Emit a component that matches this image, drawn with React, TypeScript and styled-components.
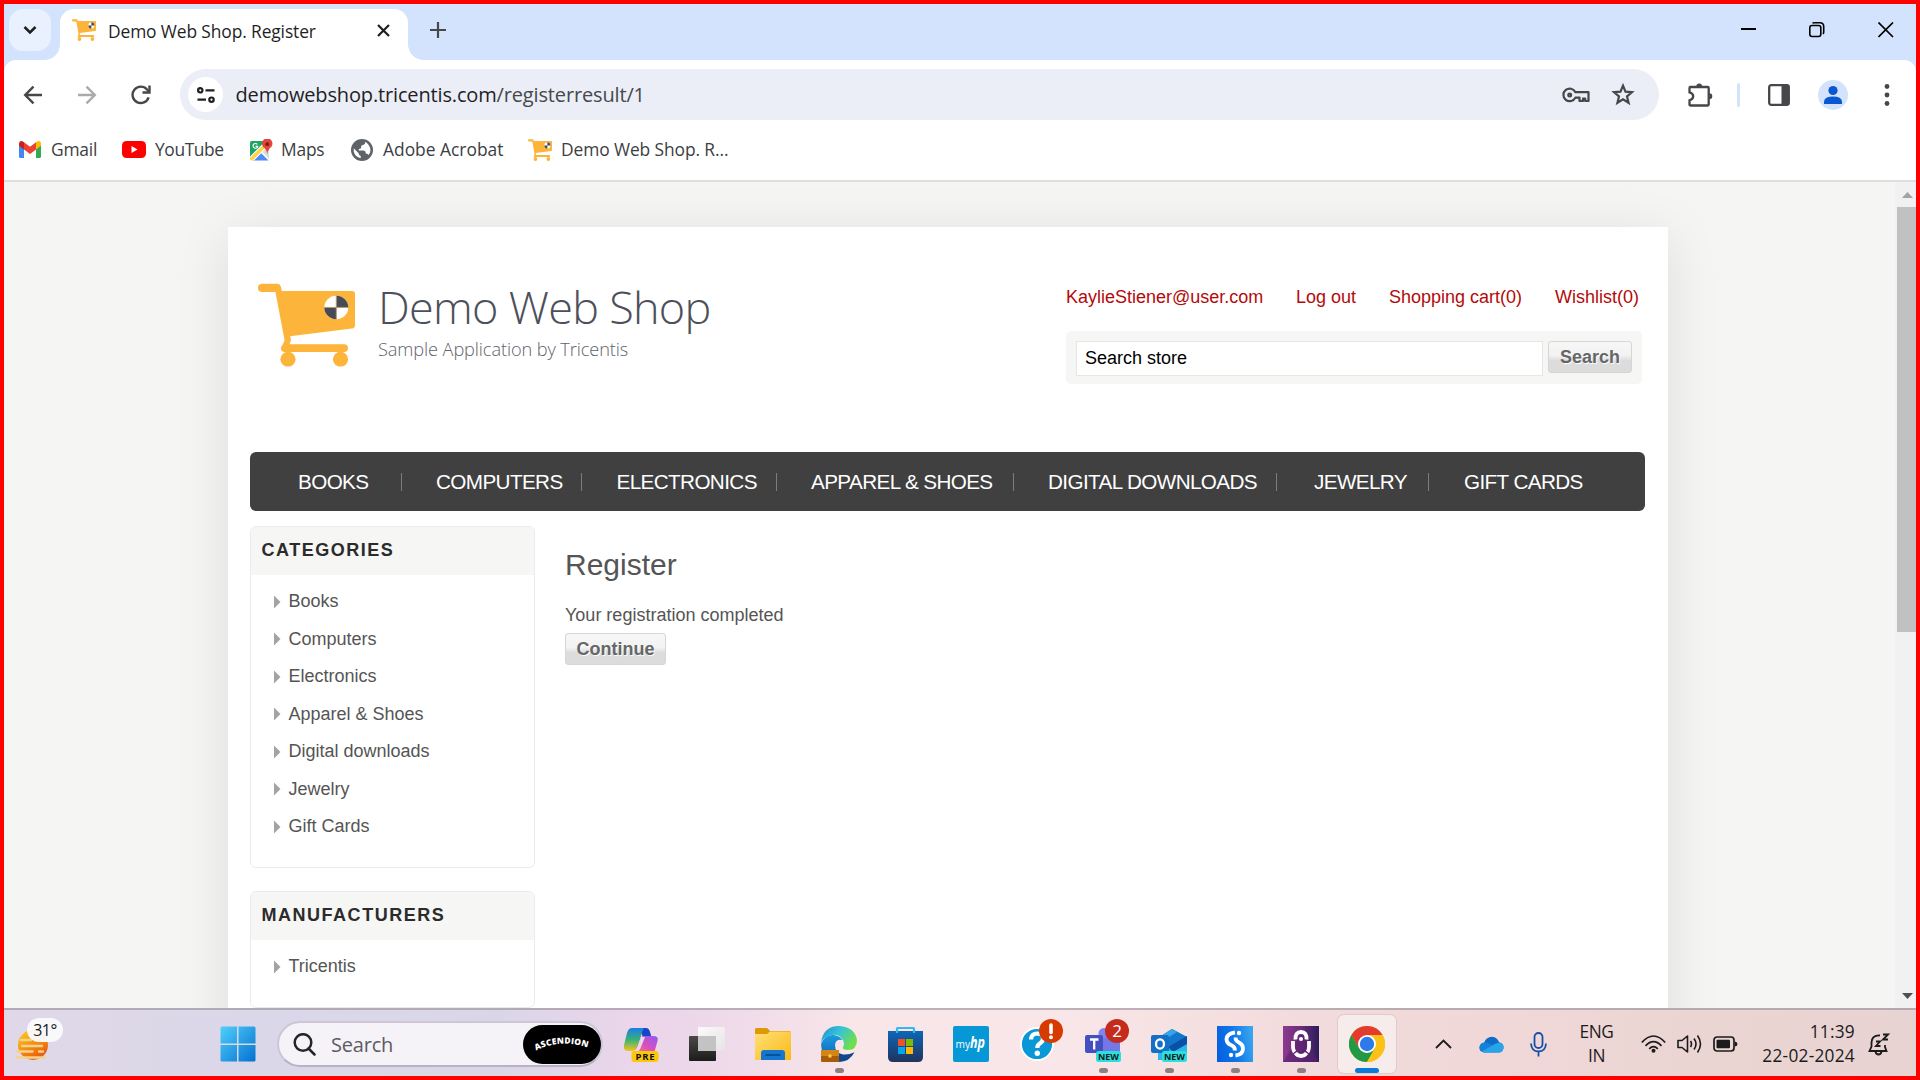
import React from "react";
import styled, { createGlobalStyle } from "styled-components";

const Global = createGlobalStyle`
  * { box-sizing: border-box; }
  html, body { margin: 0; padding: 0; overflow: hidden; }
  body { width: 1920px; height: 1080px; background: #fff; }
  ul, h1, h2, p { margin: 0; padding: 0; list-style: none; font-weight: inherit; }
  svg { display: block; flex: none; }
`;

const ui = `"Segoe UI", "Open Sans", "Noto Sans", sans-serif`;
const arial = `Arial, "Liberation Sans", sans-serif`;

/* ---------- window ---------- */

const Screen = styled.div`
  width: 1920px;
  height: 1080px;
  border: 4px solid #ff0000;
  display: flex;
  flex-direction: column;
  overflow: hidden;
  background: #d3e3fd;
  font-family: ${ui};
`;

const Label = styled.span<{ $w: number; $size: number; $ls?: number }>`
  display: block;
  flex: none;
  width: ${(p) => p.$w}px;
  font-size: ${(p) => p.$size}px;
  letter-spacing: ${(p) => p.$ls ?? 0}px;
  line-height: 1.3;
  white-space: nowrap;
`;

const TabStrip = styled.div`
  height: 56px;
  flex: none;
  display: flex;
  padding-left: 5px;
`;

const TabSearch = styled.div`
  width: 42px;
  height: 42px;
  margin: 5px 9px 0 0;
  border-radius: 14px;
  background: #e9f0fe;
  display: flex;
  align-items: center;
  justify-content: center;
`;

const Tab = styled.div`
  position: relative;
  width: 348px;
  height: 51px;
  margin-top: 5px;
  padding: 0 18px 9px 12px;
  border-radius: 14px 14px 0 0;
  background: #fff;
  display: flex;
  align-items: center;
  &::before,
  &::after {
    content: "";
    position: absolute;
    bottom: 0;
    width: 15px;
    height: 15px;
  }
  &::before {
    left: -15px;
    background: radial-gradient(circle at 0 0, transparent 14.5px, #fff 15px);
  }
  &::after {
    right: -15px;
    background: radial-gradient(circle at 100% 0, transparent 14.5px, #fff 15px);
  }
`;

const TabTitle = styled.div`
  margin-left: 12px;
  padding-top: 3px;
  flex: 1;
  color: #1f1f1f;
`;

const NewTab = styled.div`
  margin: 18px 0 0 22px;
`;

const WindowButtons = styled.div`
  margin-left: auto;
  padding: 18px 22px 0 0;
  display: flex;
  gap: 53px;
`;

const Toolbar = styled.div`
  height: 120px;
  flex: none;
  background: #fff;
  border-radius: 12px 12px 0 0;
`;

const AddressRow = styled.div`
  height: 69px;
  display: flex;
  align-items: center;
`;

const NavButtons = styled.div`
  width: 176px;
  padding-left: 19px;
  display: flex;
  gap: 34px;
`;

const Omnibox = styled.div`
  width: 1479px;
  height: 51px;
  border-radius: 26px;
  background: #ebeef7;
  display: flex;
  align-items: center;
  padding: 0 24px 0 8px;
`;

const SiteInfo = styled.div`
  width: 35px;
  height: 35px;
  border-radius: 50%;
  background: #fff;
  display: flex;
  align-items: center;
  justify-content: center;
`;

const Url = styled.div`
  flex: 1;
  display: flex;
  margin-left: 12.5px;
  color: #46484c;
  b { font-weight: 400; color: #1f1f1f; }
`;

const OmniIcons = styled.div`
  display: flex;
  align-items: center;
  gap: 21px;
`;

const ToolbarIcons = styled.div`
  margin-left: 28px;
  display: flex;
  align-items: center;
`;

const ToolbarDivider = styled.div`
  width: 3px;
  height: 24px;
  margin: 0 28px 0 24px;
  border-radius: 2px;
  background: #d3e3fd;
`;

const Avatar = styled.div`
  width: 30px;
  height: 30px;
  margin: 0 36px 0 28px;
  border-radius: 50%;
  background: #d3e3fd;
`;

const Bookmarks = styled.div`
  display: flex;
  align-items: center;
  height: 41px;
  padding-left: 15px;
  color: #3c3e42;
`;

const Bookmark = styled.div<{ $gap: number; $after: number }>`
  display: flex;
  align-items: center;
  gap: ${(p) => p.$gap}px;
  margin-right: ${(p) => p.$after}px;
`;

/* ---------- page ---------- */

const Viewport = styled.div`
  height: 828px;
  flex: none;
  border-top: 2px solid #dedfdf;
  background: #f5f5f3;
  display: flex;
  overflow: hidden;
`;

const PageArea = styled.div`
  width: 1891px;
  padding: 45px 0 0 224px;
`;

const Sheet = styled.div`
  width: 1440px;
  height: 900px;
  padding: 0 23px 0 22px;
  background: #fff;
  box-shadow: 0 9px 50px rgba(0, 0, 0, 0.1);
  font-family: ${arial};
`;

const ScrollTrack = styled.div`
  width: 21px;
  background: #f1f1f1;
  display: flex;
  flex-direction: column;
  padding: 10px 0 9px 2px;
`;

const Thumb = styled.div`
  width: 19px;
  height: 425px;
  margin: 9px 0 auto;
  background: #c1c1c1;
`;

const Header = styled.div`
  height: 225px;
  display: flex;
  justify-content: space-between;
`;

const Logo = styled.div`
  display: flex;
  padding: 56px 0 0 8px;
`;

const LogoText = styled.div`
  margin: -2px 0 0 23px;
  font-family: "Open Sans", sans-serif;
  font-weight: 300;
`;

const LogoName = styled.div`
  font-size: 45px;
  line-height: 52px;
  letter-spacing: -0.72px;
  color: #4d505a;
  white-space: nowrap;
`;

const LogoSub = styled.div`
  font-size: 18.2px;
  line-height: 24px;
  margin-top: 4px;
  letter-spacing: -0.1px;
  color: #5f626b;
  white-space: nowrap;
`;

const HeaderSide = styled.div`
  width: 579px;
  padding-top: 59px;
`;

const HeaderLinks = styled.div`
  height: 23px;
  display: flex;
  color: #b30a0a;
  line-height: 23px;
`;

const HeaderLink = styled.span<{ $w: number }>`
  width: ${(p) => p.$w}px;
  font-size: 18px;
  white-space: nowrap;
`;

const SearchBox = styled.div`
  width: 576px;
  height: 53px;
  margin-top: 22px;
  padding: 10px;
  border-radius: 5px;
  background: #f6f6f5;
  display: flex;
  align-items: flex-start;
  gap: 5px;
`;

const SearchInput = styled.div`
  width: 467px;
  height: 35px;
  padding-left: 8px;
  border: 1px solid #e6e6e6;
  background: #fff;
  color: #000;
  font-size: 18px;
  line-height: 33px;
`;

const Button = styled.div<{ $w: number }>`
  width: ${(p) => p.$w}px;
  height: 32px;
  border: 1px solid #d6d6d6;
  border-radius: 3px;
  background: linear-gradient(#f7f7f7 0, #f2f2f2 45%, #dcdcdc 62%, #dcdcdc 100%);
  color: #666;
  font: bold 18px/30px ${arial};
  text-align: center;
  text-shadow: 1px 1px 1px #fff;
`;

const Menu = styled.ul`
  height: 59px;
  border-radius: 6px;
  background: #404040;
  display: flex;
  align-items: center;
  padding-left: 48px;
  color: #fff;
  font-size: 20.7px;
`;

const MenuItem = styled.li<{ $w: number; $after: number; $last?: boolean }>`
  width: ${(p) => p.$w}px;
  margin-right: ${(p) => p.$after}px;
  height: 18px;
  line-height: 18px;
  border-right: ${(p) => (p.$last ? "0" : "1px solid #7d7d7d")};
  white-space: nowrap;
  letter-spacing: -0.62px;
`;

const Columns = styled.div`
  display: flex;
  padding-top: 15px;
`;

const Side = styled.div`
  width: 285px;
  display: flex;
  flex-direction: column;
  gap: 23px;
`;

const Block = styled.div`
  border: 1px solid #ebebea;
  border-radius: 6px;
  overflow: hidden;
  padding-bottom: 13.5px;
`;

const BlockTitle = styled.h2`
  height: 48px;
  padding-left: 10.5px;
  background: #f6f6f5;
  color: #2b2b2b;
  font: bold 18px/46px ${arial};
  letter-spacing: 1.52px;
`;

const BlockList = styled.ul`
  padding: 8px 0 8px 23px;
`;

const BlockItem = styled.li`
  height: 37.5px;
  display: flex;
  align-items: center;
  gap: 7.5px;
  color: #555;
  font-size: 18px;
`;

const Main = styled.div`
  padding: 19px 0 0 30px;
  color: #555;
`;

const Title = styled.h1`
  font-size: 30px;
  line-height: 40px;
`;

const Result = styled.p`
  margin: 17px 0 5px;
  font-size: 18px;
  line-height: 26px;
`;

/* ---------- taskbar ---------- */

const Taskbar = styled.div`
  height: 68px;
  flex: none;
  display: flex;
  align-items: center;
  padding-top: 2px;
  border-top: 2px solid rgba(150, 140, 150, 0.6);
  background: linear-gradient(90deg, #e0d8e8 0, #d9d7e8 300px, #dad6e8 500px, #ead5ea 620px, #edd8ea 700px, #f8e6e8 850px, #f9e6e8 1060px, #f2dbdc 1300px, #f0d8d8 1500px, #ead5d2 1700px, #e8d3d3 1912px);
`;

const Weather = styled.div`
  position: relative;
  width: 216px;
  padding-left: 11px;
`;

const Temp = styled.div`
  position: absolute;
  left: 23px;
  top: -7px;
  width: 36px;
  height: 24px;
  border-radius: 12px;
  background: rgba(250, 249, 252, 0.96);
  color: #1b1b1b;
  font-size: 16px;
  line-height: 24px;
  text-align: center;
  letter-spacing: -0.5px;
`;

const SearchPill = styled.div`
  width: 326px;
  height: 46px;
  margin-left: 21px;
  border: 2px solid #cdc6d8;
  border-bottom-color: #b9b2c4;
  border-radius: 23px;
  background: #f5f2f8;
  display: flex;
  align-items: center;
  padding-left: 14px;
`;

const SearchHint = styled.span`
  flex: 1;
  margin-left: 15px;
  color: #5d5a62;
  font-size: 20px;
  letter-spacing: -0.2px;
`;

const Apps = styled.div`
  display: flex;
  margin-left: 9px;
`;

const TaskButton = styled.div<{ $active?: boolean }>`
  position: relative;
  width: 58px;
  height: 58px;
  margin-right: 8px;
  border-radius: 6px;
  background: ${(p) => (p.$active ? "#f7ecec" : "transparent")};
  box-shadow: ${(p) => (p.$active ? "0 0 0 1px rgba(120,90,90,.12)" : "none")};
  display: flex;
  align-items: center;
  justify-content: center;
`;

const Running = styled.i<{ $active?: boolean }>`
  position: absolute;
  bottom: 0;
  width: ${(p) => (p.$active ? 24 : 9)}px;
  height: 5px;
  border-radius: 3px;
  background: ${(p) => (p.$active ? "#0a7bd6" : "#8d8082")};
`;

const Tray = styled.div`
  display: flex;
  align-items: center;
  margin-left: auto;
  color: #1b1b1b;
`;

const TrayText = styled.div<{ $align: string; $ls: number; $w: number }>`
  width: ${(p) => p.$w}px;
  font-size: 17.3px;
  line-height: 24px;
  letter-spacing: ${(p) => p.$ls}px;
  text-align: ${(p) => p.$align};
  white-space: nowrap;
`;

const TraySpace = styled.div<{ $l: number }>`
  margin-left: ${(p) => p.$l}px;
`;

const FreeSvg = styled.svg`
  overflow: visible;
`;

/* ---------- drawings ---------- */

const Cart = ({ w, h }: { w: number; h: number }) => (
  <svg width={w} height={h} viewBox="0 0 97 86" preserveAspectRatio="none">
    <path d="M4 .8h15.500q3.500 0 4.300 7.400h70.200q3 0 3 3v32q0 3-3 3.400L32 54.400q2 4-.6 8.200h54.600a4 4 0 0 1 0 8H26q-4-1-2.800-5 2-3 3.400-7L17.400 9.300H4A4.200 4.200 0 0 1 4 .8z" fill="#fdb43b" />
    <circle cx="30" cy="78" r="7.600" fill="#fdb43b" />
    <circle cx="82.500" cy="78" r="7.600" fill="#fdb43b" />
    <circle cx="78.300" cy="25" r="12" fill="#fff" />
    <path d="M78.300 25V13a12 12 0 0 1 12 12zM78.300 25v12a12 12 0 0 1-12-12z" fill="#474b56" />
    <path d="M78.300 13v24M66.300 25h24" stroke="#b39a72" strokeWidth="1" />
  </svg>
);

const Arrow = ({ flip, color }: { flip?: boolean; color: string }) => (
  <svg width="20" height="20" viewBox="0 0 20 20" fill="none" stroke={color} strokeWidth="2.400" transform={flip ? "rotate(180)" : undefined}>
    <path d="M19 10H2.500M10.500 1.700L2.200 10l8.300 8.300" />
  </svg>
);

const Gmail = () => (
  <svg width="22" height="17" viewBox="0 0 22 17">
    <path d="M0 2.500V15.500Q0 17 1.500 17H5V7z" fill="#4285f4" />
    <path d="M22 2.500V15.500Q22 17 20.500 17H17V7z" fill="#34a853" />
    <path d="M17 1.300V8.500L22 4.800V2.500Q21.500-.8 18.200.4z" fill="#fbbc04" />
    <path d="M0 2.500V4.800L5 8.500V1.300L3.800.4Q.5-.8 0 2.500z" fill="#c5221f" />
    <path d="M5 1.300L11 5.800 17 1.300V8.500L11 13 5 8.500z" fill="#ea4335" />
  </svg>
);

const YouTube = () => (
  <svg width="24" height="17" viewBox="0 0 24 17">
    <rect width="24" height="17" rx="4.500" fill="#ff0000" />
    <path d="M9.500 5v7l6-3.500z" fill="#fff" />
  </svg>
);

const Maps = () => (
  <svg width="23" height="22" viewBox="0 0 23 22">
    <path d="M1.500 2H13l3 4L1 20Q0 19.500 0 18V3.500Q0 2 1.500 2z" fill="#1fa463" />
    <path d="M11 11.500L19 20V6l-3-1z" fill="#dadcde" />
    <path d="M2.500 21.500L10.500 13.500l8 8z" fill="#4c8bf5" />
    <path d="M0 17.500L13 4.500l4 4L4 21.500H1.500Q0 21.500 0 20z" fill="#fff" />
    <path d="M0 19L13.500 5.500l2.500 2.500L2.500 21.500Q0 21.500 0 20z" fill="#ffd24a" />
    <path d="M7.300 5.300a2.400 2.400 0 1 0 .5 2.100H5.600" fill="none" stroke="#fff" strokeWidth="1.100" />
    <path d="M17.200 15q-.4-3.500-2.600-6a5.200 5.200 0 1 1 5.300 0Q17.700 11.500 17.200 15z" fill="#e2453a" />
    <circle cx="17.300" cy="5.200" r="1.900" fill="#7d1c16" />
  </svg>
);

const Globe = () => (
  <svg width="22" height="22" viewBox="0 0 22 22">
    <circle cx="11" cy="11" r="11" fill="#5f6368" />
    <path d="M14 2.800q.5 2.600-2 3.200-2.300.2-1.800 2.500-.4 1.500-2.400 1.500v1.500h5q2.300.5 2 3 2.200.2 3 1.500 2-2.600 1.600-6Q18.300 5 14 2.800zM2.700 9.200Q1.800 17 9.700 19.200V17q-2-.4-2-2.700z" fill="#fff" />
  </svg>
);

const Key = () => (
  <svg width="28" height="16" viewBox="0 0 28 16" fill="none" stroke="#46474a" strokeWidth="2.200">
    <path d="M13.400 5.200A6.300 6.300 0 1 0 13.400 10.600H17.500V14H21V11.500h2.200V14H26.500V5.200z" strokeLinejoin="round" />
    <circle cx="7.700" cy="7.900" r="1.400" />
  </svg>
);

const Star = () => (
  <svg width="24" height="23" viewBox="0 0 24 23" fill="none" stroke="#46474a" strokeWidth="2.200">
    <path d="M12 2.700l2.500 6 6.500.5-5 4.300 1.600 6.300L12 16.400l-5.600 3.400L8 13.500 3 9.200l6.500-.5z" />
  </svg>
);

const Puzzle = () => (
  <svg width="26" height="26" viewBox="0 0 26 26">
    <path d="M3.500 5h17.200q1 0 1 1v16.500q0 1-1 1H3.500q-1 0-1-1v-4.200q3.700-1 3.700-4t-3.700-4V6q0-1 1-1z" fill="none" stroke="#46474a" strokeWidth="2.300" />
    <path d="M9.300 4.500a2.900 2.900 0 0 1 5.800 0zM22.300 11.300a3 3 0 0 1 0 6z" fill="#46474a" />
  </svg>
);

const Bullet = () => (
  <svg width="7" height="14" viewBox="0 0 7 14"><path d="M0 .5L6.500 7 0 13.500z" fill="#a3a3a3" /></svg>
);

const Copilot = () => (
  <svg width="36" height="36" viewBox="0 0 36 36">
    <defs>
      <linearGradient id="cp1" x1="0" y1="0" x2="0" y2="1"><stop offset="0" stopColor="#1f7be8" /><stop offset=".5" stopColor="#35b27a" /><stop offset="1" stopColor="#f2c51a" /></linearGradient>
      <linearGradient id="cp2" x1="1" y1="0" x2="0" y2="1"><stop offset="0" stopColor="#8f5af0" /><stop offset=".5" stopColor="#d84fc0" /><stop offset="1" stopColor="#ff8a5c" /></linearGradient>
    </defs>
    <path d="M16 2h7q3 0 4 4l1.500 5H20z" fill="#1546c8" />
    <path d="M9 2h12q-2 3-3 8l-3 11q-1 4-5 4H5q-5 0-4-6L4 7Q5.500 2 9 2z" fill="url(#cp1)" />
    <path d="M21 10h9q6 0 4.500 5l-2.500 9q-1 3-4 3H8q3-.5 5-5l4-6q0-6 4-6z" fill="url(#cp2)" />
    <path d="M18 11h4q-2 5-4 10-1.500 4.500-4.500 4.500H9q4-1 5.500-5z" fill="#eed6ee" />
    <rect x="8.500" y="25" width="27" height="11" rx="3" fill="#fcc60a" />
    <text x="22" y="33.800" textAnchor="middle" fontFamily="Open Sans" fontWeight="700" fontSize="9.500" textLength="19" fill="#111">PRE</text>
  </svg>
);

const TaskView = () => (
  <svg width="36" height="36" viewBox="0 0 36 36">
    <defs>
      <linearGradient id="tv" x1="0" y1="0" x2="0" y2="1"><stop offset="0" stopColor="#4a4a48" /><stop offset="1" stopColor="#1c1c1c" /></linearGradient>
      <linearGradient id="tv2" x1="0" y1="0" x2="1" y2="1"><stop offset="0" stopColor="#fbfbfb" /><stop offset="1" stopColor="#e6e3e4" /></linearGradient>
    </defs>
    <rect x="0" y="10" width="27" height="25" rx="1" fill="url(#tv)" />
    <rect x="9" y="1" width="27" height="24" rx="1" fill="url(#tv2)" />
    <path d="M9 10h18v15H10q-1 0-1-1z" fill="#c3c3c3" />
  </svg>
);

const Folder = () => (
  <svg width="36" height="36" viewBox="0 0 36 36">
    <defs>
      <linearGradient id="fo" x1="0" y1="0" x2="1" y2="1"><stop offset="0" stopColor="#ffe07a" /><stop offset="1" stopColor="#fbb914" /></linearGradient>
    </defs>
    <path d="M0 3.500Q0 2 1.500 2H11q1.500 0 2.500 1.200L15 5h19.500Q36 5 36 6.500V12H0z" fill="#dd9a06" />
    <path d="M0 8h12l3-2.500h19.500Q36 5.500 36 7V34H0z" fill="url(#fo)" />
    <path d="M6 34v-7q0-3 3-3h18q3 0 3 3v7z" fill="#1576d0" />
    <path d="M10.500 29h15" stroke="#0a4c94" strokeWidth="1.800" />
  </svg>
);

const Edge = () => (
  <svg width="36" height="36" viewBox="0 0 36 36">
    <defs>
      <linearGradient id="ed1" x1="0" y1="0" x2="1" y2=".5"><stop offset="0" stopColor="#1c8fd2" /><stop offset=".5" stopColor="#36c3d6" /><stop offset="1" stopColor="#6fe04c" /></linearGradient>
      <linearGradient id="ed2" x1="0" y1="0" x2="0" y2="1"><stop offset="0" stopColor="#1b9de0" /><stop offset="1" stopColor="#0d5bb0" /></linearGradient>
    </defs>
    <path d="M14 19q-.5 8 8 9.500 6 .5 11.500-2.200-5 9.700-15.500 9.700-7-7-4-17z" fill="#10468c" />
    <path d="M0 18Q4 8 13 9q6 1 8.500 5-7-1-7.500 5-.5 8 6 17h-4Q1 35 0 18z" fill="url(#ed2)" />
    <path d="M0 17Q2 0 18 0q16 1 18 14 0 10-9 10-6 0-5-3 2-3 0-7-4-6-11-5Q3 10 0 17z" fill="url(#ed1)" />
    <rect y="24" width="18" height="12" rx="1" fill="#a85c0a" />
    <path d="M0 25q0-1 1-1h16q1 0 1 1v5H0z" fill="#d58416" />
    <rect x="7.500" y="28.500" width="3" height="3" fill="#ffd54a" />
  </svg>
);

const Store = () => (
  <svg width="35" height="36" viewBox="0 0 35 36">
    <defs>
      <linearGradient id="st" x1="0" y1="0" x2="0" y2="1"><stop offset="0" stopColor="#0d66ba" /><stop offset="1" stopColor="#20345c" /></linearGradient>
    </defs>
    <path d="M0 5h35v26q0 5-5 5H5q-5 0-5-5z" fill="url(#st)" />
    <path d="M9 7V2.500Q9 2 9.500 2h16q.5 0 .5.5V7" fill="none" stroke="#35b7f2" strokeWidth="2.200" />
    <path d="M10 13h7v7h-7z" fill="#f25022" /><path d="M18 13h7v7h-7z" fill="#7fba00" />
    <path d="M10 21h7v7h-7z" fill="#00a4ef" /><path d="M18 21h7v7h-7z" fill="#ffb900" />
  </svg>
);

const MyHp = () => (
  <svg width="36" height="36" viewBox="0 0 36 36">
    <rect width="36" height="36" rx="2" fill="#0698d6" />
    <text x="2.500" y="21.500" fontFamily="Open Sans" fontSize="11" textLength="14.500" lengthAdjust="spacingAndGlyphs" fill="#fff">my</text>
    <text x="17" y="22" fontFamily="Open Sans" fontStyle="italic" fontWeight="700" fontSize="15.500" textLength="15" lengthAdjust="spacingAndGlyphs" fill="#fff">hp</text>
  </svg>
);

const Help = () => (
  <FreeSvg width="36" height="36" viewBox="-1 8 36 36">
    <circle cx="17" cy="26" r="16" fill="#0a97d7" stroke="#fff" strokeWidth="1.800" />
    <path d="M11 21.500q.3-6 6.300-6 5.700.3 5.700 5 0 3-3.200 5-2.500 1.500-2.500 4.500" fill="none" stroke="#fff" strokeWidth="4.200" />
    <circle cx="17.300" cy="35.300" r="2.700" fill="#fff" />
    <circle cx="31" cy="13" r="12" fill="#d83b01" />
    <path d="M31 7v7.500" stroke="#fff" strokeWidth="3.600" strokeLinecap="round" />
    <circle cx="31" cy="19.300" r="2" fill="#fff" />
  </FreeSvg>
);

const NewTag = ({ x, y }: { x: number; y: number }) => (
  <g>
    <rect x={x} y={y} width="25" height="11" rx="2.500" fill="#2be0dc" />
    <text x={x + 12.5} y={y + 8.8} textAnchor="middle" fontFamily="Open Sans" fontWeight="700" fontSize="9" textLength="21" lengthAdjust="spacingAndGlyphs" fill="#10201f">NEW</text>
  </g>
);

const Teams = () => (
  <FreeSvg width="36" height="36" viewBox="0 7 36 36">
    <circle cx="19" cy="14.500" r="5.500" fill="#7f85f0" />
    <path d="M14 19h21v13q0 6-8 6H14z" fill="#7478e6" />
    <rect x="0" y="16" width="18" height="18" rx="2" fill="#4450c0" />
    <path d="M5 20.500h8.500M9.200 20.500V30.500" stroke="#fff" strokeWidth="2.300" fill="none" />
    <NewTag x={11} y={32} />
    <circle cx="32" cy="12" r="12" fill="#c42b1c" />
    <text x="32" y="18" textAnchor="middle" fontFamily="Open Sans" fontSize="17" fill="#fff">2</text>
  </FreeSvg>
);

const Outlook = () => (
  <svg width="36" height="36" viewBox="0 0 36 36">
    <path d="M7 12L21 3l15 8v18q0 5-5 5H7z" fill="#2fb4ee" />
    <path d="M7 12L21 3l15 8-16 9H7z" fill="#1277cc" />
    <path d="M17 21L36 10v8L22 26z" fill="#0b4fa8" />
    <path d="M7 12L21 3l5 3-14 9z" fill="#38a4e8" />
    <rect x="0" y="9" width="18" height="18" rx="2" fill="#1470c4" />
    <ellipse cx="9" cy="18" rx="4" ry="4.700" fill="none" stroke="#fff" strokeWidth="2.300" />
    <NewTag x={11} y={25} />
  </svg>
);

const BlueS = () => (
  <svg width="36" height="36" viewBox="0 0 36 36">
    <defs><linearGradient id="bs" x1="0" y1=".6" x2="1" y2=".4"><stop offset="0" stopColor="#0560e0" /><stop offset=".5" stopColor="#0f78ea" /><stop offset="1" stopColor="#3aa4ee" /></linearGradient></defs>
    <rect width="36" height="36" fill="url(#bs)" />
    <path d="M18 6.500q-8 1-8.500 6.500.3 4.500 4.500 6 4 1.500 4 5.500M18.500 29.500q7.500-1 7.500-7 0-4-4-6-3.500-1.500-3.500-5" fill="none" stroke="#fff" strokeWidth="3.800" />
    <circle cx="22" cy="7" r="2.200" fill="#fff" /><circle cx="14" cy="29" r="2.200" fill="#fff" />
  </svg>
);

const PurpleU = () => (
  <svg width="36" height="36" viewBox="0 0 36 36">
    <defs><linearGradient id="pu" x1="0" y1="0" x2="1" y2="0"><stop offset="0" stopColor="#8e3a8e" /><stop offset=".5" stopColor="#6a2d78" /><stop offset="1" stopColor="#2e1b5a" /></linearGradient></defs>
    <rect width="36" height="36" fill="url(#pu)" />
    <path d="M0 36L18 8l18 28z" fill="#5a2170" opacity=".6" />
    <path d="M12.500 13.500Q12 6 18 6t5.500 7.500M10 15v6q0 3 1.500 5M26 15v6q0 3-1.500 5M12.500 27q2 3 5.500 3t5.500-3" fill="none" stroke="#fff" strokeWidth="3.800" />
    <circle cx="18" cy="13" r="2" fill="#fff" />
  </svg>
);

const Chrome = () => (
  <svg width="36" height="36" viewBox="0 0 36 36">
    <circle cx="18" cy="18" r="18" fill="#fbc116" />
    <path d="M2.400 9A18 18 0 0 1 33.600 9H18L10.200 22.500z" fill="#e33b2e" />
    <path d="M2.400 9A18 18 0 0 0 18 36l7.800-13.500H10.200z" fill="#229a45" />
    <path d="M33.600 9A18 18 0 0 1 18 36l7.800-13.500Q28 15 22 9z" fill="#fbc116" />
    <circle cx="18" cy="18" r="9" fill="#fff" /><circle cx="18" cy="18" r="7.200" fill="#2f7aea" />
  </svg>
);

const WeatherIcon = () => (
  <svg width="35" height="38" viewBox="0 0 35 38">
    <defs><linearGradient id="we" x1="0" y1="0" x2=".6" y2="1"><stop offset="0" stopColor="#ffd21c" /><stop offset="1" stopColor="#ea5b0c" /></linearGradient></defs>
    <circle cx="18" cy="20" r="15" fill="url(#we)" />
    <path d="M6 15h10M7 21h20M1.500 26.500h16M24 26.500h4M1.500 32.500h28" stroke="#f3d38b" strokeWidth="2.400" strokeLinecap="round" />
  </svg>
);

const Ascendion = () => (
  <svg width="78" height="39" viewBox="0 0 78 39">
    <defs><path id="arc" d="M13 25.500Q38 13 67 23.500" /></defs>
    <rect width="78" height="39" rx="19.500" fill="#000" />
    <text fontFamily="Open Sans" fontWeight="800" fontSize="8.500" fill="#fff"><textPath href="#arc" textLength="53">ASCENDION</textPath></text>
  </svg>
);

const menu = [
  { t: "BOOKS", w: 104, a: 34 },
  { t: "COMPUTERS", w: 146, a: 34.5 },
  { t: "ELECTRONICS", w: 160, a: 34.5 },
  { t: "APPAREL & SHOES", w: 202.5, a: 34.5 },
  { t: "DIGITAL DOWNLOADS", w: 229, a: 37 },
  { t: "JEWELRY", w: 115, a: 35 },
  { t: "GIFT CARDS", w: 130, a: 0 },
];

const categories = ["Books", "Computers", "Electronics", "Apparel & Shoes", "Digital downloads", "Jewelry", "Gift Cards"];

const apps = [
  { icon: <Copilot /> },
  { icon: <TaskView /> },
  { icon: <Folder /> },
  { icon: <Edge />, run: true },
  { icon: <Store /> },
  { icon: <MyHp /> },
  { icon: <Help /> },
  { icon: <Teams />, run: true },
  { icon: <Outlook />, run: true },
  { icon: <BlueS />, run: true },
  { icon: <PurpleU />, run: true },
  { icon: <Chrome />, run: true, active: true },
];

const SideBlock = ({ title, items }: { title: string; items: string[] }) => (
  <Block>
    <BlockTitle>{title}</BlockTitle>
    <BlockList>
      {items.map((i) => (
        <BlockItem key={i}><Bullet />{i}</BlockItem>
      ))}
    </BlockList>
  </Block>
);

export default function App() {
  return (
    <Screen>
      <Global />
      <TabStrip>
        <TabSearch>
          <svg width="14" height="10" viewBox="0 0 14 10" fill="none" stroke="#1f1f1f" strokeWidth="2.500"><path d="M1.500 2L7 7.500 12.500 2" /></svg>
        </TabSearch>
        <Tab>
          <Cart w={24} h={22} />
          <TabTitle><Label $w={220} $size={17.4} $ls={-0.12}>Demo Web Shop. Register</Label></TabTitle>
          <svg width="13" height="13" viewBox="0 0 13 13" stroke="#1f1f1f" strokeWidth="2.200"><path d="M1 1l11 11M12 1L1 12" /></svg>
        </Tab>
        <NewTab>
          <svg width="16" height="16" viewBox="0 0 16 16" stroke="#46474a" strokeWidth="2.200"><path d="M8 0v16M0 8h16" /></svg>
        </NewTab>
        <WindowButtons>
          <svg width="16" height="16" viewBox="0 0 16 16" stroke="#000" strokeWidth="2"><path d="M1 7h15" /></svg>
          <svg width="16" height="16" viewBox="0 0 16 16" fill="none" stroke="#000" strokeWidth="1.600"><rect x=".8" y="3.500" width="11" height="11" rx="2.200" /><path d="M3.500 1.300Q4 .8 5.500.8H11q3.700 0 3.700 3.700V10q0 1.200-.7 2" /></svg>
          <svg width="16" height="16" viewBox="0 0 16 16" stroke="#000" strokeWidth="1.700"><path d="M.5.500l14.500 14.500M15 .5L.5 15" /></svg>
        </WindowButtons>
      </TabStrip>
      <Toolbar>
        <AddressRow>
          <NavButtons>
            <Arrow color="#46474a" />
            <Arrow flip color="#a9aaac" />
            <svg width="20" height="20" viewBox="0 0 20 20" fill="none" stroke="#46474a" strokeWidth="2.400"><path d="M17.600 12.300A8.200 8.200 0 1 1 16 4.500l2 2" /><path d="M18.500.5V7.500h-7" /></svg>
          </NavButtons>
          <Omnibox>
            <SiteInfo>
              <svg width="18" height="16" viewBox="0 0 18 16" fill="none" stroke="#1f1f1f" strokeWidth="2.200"><circle cx="3.300" cy="3.300" r="2.200" /><path d="M8.500 3.300H17.500M.5 12.700h8.500" /><circle cx="14.500" cy="12.700" r="2.200" /></svg>
            </SiteInfo>
            <Url><Label $w={500} $size={20} $ls={-0.15}><b>demowebshop.tricentis.com</b>/registerresult/1</Label></Url>
            <OmniIcons><Key /><Star /></OmniIcons>
          </Omnibox>
          <ToolbarIcons>
            <Puzzle />
            <ToolbarDivider />
            <svg width="22" height="22" viewBox="0 0 22 22"><rect x="1.200" y="1.200" width="19.600" height="19.600" rx="2" fill="none" stroke="#46474a" strokeWidth="2.300" /><path d="M13.500 1h6q1.500 0 1.500 1.500v17q0 1.500-1.500 1.500h-6z" fill="#46474a" /></svg>
            <Avatar>
              <svg width="30" height="30" viewBox="0 0 30 30" fill="#0b57d0"><circle cx="15" cy="10.500" r="4.600" /><path d="M6 24v-2.500Q6.500 16.500 15 16.500t9 5V24z" /></svg>
            </Avatar>
            <svg width="6" height="24" viewBox="0 0 6 24" fill="#46474a"><circle cx="3" cy="3.500" r="2.400" /><circle cx="3" cy="12" r="2.400" /><circle cx="3" cy="20.500" r="2.400" /></svg>
          </ToolbarIcons>
        </AddressRow>
        <Bookmarks>
          <Bookmark $gap={10} $after={24}><Gmail /><Label $w={47} $size={17.4} $ls={-0.2}>Gmail</Label></Bookmark>
          <Bookmark $gap={9} $after={26}><YouTube /><Label $w={69} $size={17.4} $ls={-0.4}>YouTube</Label></Bookmark>
          <Bookmark $gap={8} $after={26}><Maps /><Label $w={44} $size={17.4} $ls={-0.2}>Maps</Label></Bookmark>
          <Bookmark $gap={10} $after={23}><Globe /><Label $w={122} $size={17.4}>Adobe Acrobat</Label></Bookmark>
          <Bookmark $gap={9} $after={0}><Cart w={24} h={22} /><Label $w={170} $size={17.4} $ls={-0.1}>Demo Web Shop. R...</Label></Bookmark>
        </Bookmarks>
      </Toolbar>
      <Viewport>
        <PageArea>
          <Sheet>
            <Header>
              <Logo>
                <Cart w={97} h={84} />
                <LogoText>
                  <LogoName>Demo Web Shop</LogoName>
                  <LogoSub>Sample Application by Tricentis</LogoSub>
                </LogoText>
              </Logo>
              <HeaderSide>
                <HeaderLinks>
                  <HeaderLink $w={230}>KaylieStiener@user.com</HeaderLink>
                  <HeaderLink $w={93}>Log out</HeaderLink>
                  <HeaderLink $w={166}>Shopping cart(0)</HeaderLink>
                  <HeaderLink $w={86}>Wishlist(0)</HeaderLink>
                </HeaderLinks>
                <SearchBox>
                  <SearchInput>Search store</SearchInput>
                  <Button $w={84}>Search</Button>
                </SearchBox>
              </HeaderSide>
            </Header>
            <Menu>
              {menu.map((m) => (
                <MenuItem key={m.t} $w={m.w} $after={m.a} $last={m.a === 0}>{m.t}</MenuItem>
              ))}
            </Menu>
            <Columns>
              <Side>
                <SideBlock title="CATEGORIES" items={categories} />
                <SideBlock title="MANUFACTURERS" items={["Tricentis"]} />
              </Side>
              <Main>
                <Title>Register</Title>
                <Result>Your registration completed</Result>
                <Button $w={101}>Continue</Button>
              </Main>
            </Columns>
          </Sheet>
        </PageArea>
        <ScrollTrack>
          <svg width="19" height="6" viewBox="0 0 19 6"><path d="M5 6l5.500-6L16 6z" fill="#a3a3a3" /></svg>
          <Thumb />
          <svg width="19" height="6" viewBox="0 0 19 6"><path d="M5 0l5.500 6L16 0z" fill="#505050" /></svg>
        </ScrollTrack>
      </Viewport>
      <Taskbar>
        <Weather>
          <WeatherIcon />
          <Temp>31°</Temp>
        </Weather>
        <svg width="36" height="36" viewBox="0 0 36 36">
          <defs><linearGradient id="wi" x1="0" y1="0" x2="1" y2="1"><stop offset="0" stopColor="#4fd0fb" /><stop offset="1" stopColor="#0571d0" /></linearGradient></defs>
          <path d="M2 .5h15v17H.5V2Q.5.500 2 .5zM18.500.5H34q1.500 0 1.500 1.500v15.500h-17zM.5 19H17v16.500H2Q.5 35.500.5 34zM18.500 19h17v15q0 1.500-1.500 1.500H18.500z" fill="url(#wi)" />
        </svg>
        <SearchPill>
          <svg width="23" height="23" viewBox="0 0 23 23" fill="none" stroke="#26262a" strokeWidth="2.500"><circle cx="10" cy="9.500" r="8.300" /><path d="M15.500 15.500l6 6" strokeLinecap="round" /></svg>
          <SearchHint>Search</SearchHint>
          <Ascendion />
        </SearchPill>
        <Apps>
          {apps.map((a, i) => (
            <TaskButton key={i} $active={a.active}>
              {a.icon}
              {a.run && <Running $active={a.active} />}
            </TaskButton>
          ))}
        </Apps>
        <Tray>
          <svg width="17" height="10" viewBox="0 0 17 10" fill="none" stroke="#1b1b1b" strokeWidth="1.800"><path d="M1 9l7.500-7.500L16 9" /></svg>
          <TraySpace $l={27}>
            <svg width="25" height="17" viewBox="0 0 25 17"><path d="M5 7Q7 1 13 .8q5.500.5 7 5.500 5 1 4.500 6-1 4.200-5 4.200H6Q.5 16 .5 11.500.8 7.500 5 7z" fill="#0f6cc8" /><path d="M5 6.500q3-.5 5 1l10 5-14 4Q.5 16 .5 11.500.8 7 5 6.500z" fill="#1482d8" /><path d="M3 15.500L15 8.500q3-2 6-1.700 4 1.200 3.500 5.500-1 4.200-5 4.200H6q-2 0-3-1z" fill="#28a4ea" /></svg>
          </TraySpace>
          <TraySpace $l={26}>
            <svg width="17" height="25" viewBox="0 0 17 25" fill="none" stroke="#1450a8" strokeWidth="1.800"><rect x="4.500" y="1" width="8" height="15" rx="4" /><path d="M1 11.500q.5 8 7.500 8t7.500-8M8.500 19.500v5" /></svg>
          </TraySpace>
          <TraySpace $l={29.5}>
            <TrayText $w={40} $align="center" $ls={-0.4}>ENG<br />IN</TrayText>
          </TraySpace>
          <TraySpace $l={24.5}>
            <svg width="25" height="18" viewBox="0 0 25 18" fill="none" stroke="#1b1b1b" strokeWidth="1.700"><path d="M.8 7.500Q12.500-5.500 24.200 7.500M4.500 10.800q8-8.300 16 0M8.200 13.800q4.300-4.300 8.600 0" /><circle cx="12.500" cy="15.800" r="2" fill="#1b1b1b" stroke="none" /></svg>
          </TraySpace>
          <TraySpace $l={11}>
            <svg width="25" height="20" viewBox="0 0 25 20" fill="none" stroke="#1b1b1b" strokeWidth="1.600"><path d="M1 6.500h4L10.500 2v16L5 13.500H1zM13.500 7q2 3 0 6M17 4.500q4 5.500 0 11M20.500 1.500q6 8.500 0 17" strokeLinejoin="round" /></svg>
          </TraySpace>
          <TraySpace $l={11}>
            <svg width="25" height="16" viewBox="0 0 25 16"><rect x="1" y="1" width="20" height="14" rx="3" fill="none" stroke="#1b1b1b" strokeWidth="1.700" /><rect x="3.500" y="3.700" width="13.500" height="8.600" rx="1" fill="#1b1b1b" /><path d="M22 5.500q2.500.5 2.500 2.500T22 10.500z" fill="#1b1b1b" /></svg>
          </TraySpace>
          <TraySpace $l={19}>
            <TrayText $w={98} $align="right" $ls={0.25}>11:39<br />22-02-2024</TrayText>
          </TraySpace>
          <TraySpace $l={13}>
            <svg width="22" height="23" viewBox="0 0 22 23" fill="none" stroke="#1b1b1b" strokeWidth="1.800"><path d="M12 2.500Q4 2 3.500 9.500v4L1.500 18h17l-1.500-4v-2M7.500 18.500q.5 3 3 3t3-3" /><path d="M8 8.500h4L8 13h4.500M15 1.500h5l-5 5h5" /></svg>
          </TraySpace>
          <TraySpace $l={26} />
        </Tray>
      </Taskbar>
    </Screen>
  );
}
